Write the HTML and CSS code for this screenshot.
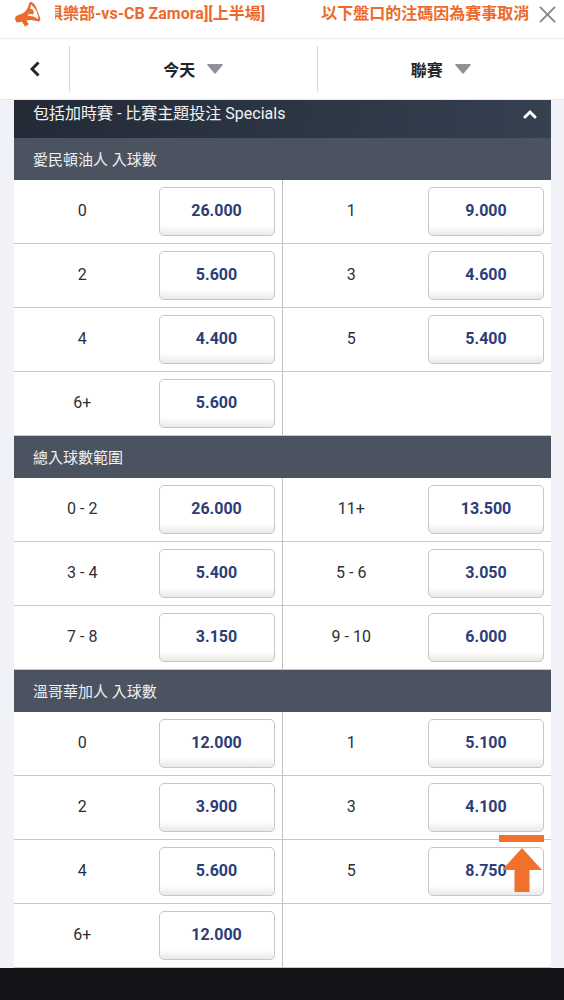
FILE: index.html
```html
<!DOCTYPE html>
<html lang="zh-Hant">
<head>
  <meta charset="utf-8">
  <meta name="viewport" content="width=device-width, initial-scale=1">
  <title>比賽主題投注</title>
  <link rel="stylesheet" href="styles.css">
</head>
<body>
  <div class="notice">
    <svg class="notice-icon" viewBox="0 0 26 26" aria-hidden="true">
      <path fill="#ee6a2c" fill-rule="evenodd" d="M14 2.500 Q14.600 0.600 16.400 1 Q18.600 1.600 20.600 5 L25 16.500 Q26 20.600 23.600 20.600 Q18 18.600 13 19.200 L11.500 19.600 L13.800 23.600 L10 25.600 L7 20.800 L2.500 21.600 Q1 21.600 0.200 18.600 Q-0.300 15.800 1.200 15 L8.500 12 Q12.600 9.200 14 2.500 Z M16 3.600 Q15.600 10 12.600 14.800 Q18 14.600 23.400 18 Q22.600 8.800 16 3.600 Z"/>
      <path fill="#ee6a2c" d="M15.400 7.800 Q18.600 8 18.800 11 Q18.800 12.600 17.800 13.400 Q16.400 12.600 13.400 13.400 Z"/>
    </svg>
    <div class="ticker">
      <span>俱樂部-vs-CB Zamora][上半場]</span>
      <span>以下盤口的注碼因為賽事取消</span>
    </div>
    <button class="notice-close" type="button" aria-label="關閉">
      <svg viewBox="0 0 18 18"><path d="M1 1 L17 17 M17 1 L1 17"/></svg>
    </button>
  </div>

  <nav class="filters">
    <button class="back" type="button" aria-label="返回">
      <svg viewBox="0 0 10 16"><path d="M8.500 1.500 L2 8 L8.500 14.500"/></svg>
    </button>
    <button class="filter" type="button">今天 <svg class="caret" viewBox="0 0 16 10"><path d="M1 0 H15 Q16.500 0 15.500 1.200 L9 9 Q8 10 7 9 L0.500 1.200 Q-0.500 0 1 0 Z"/></svg></button>
    <button class="filter" type="button">聯賽 <svg class="caret" viewBox="0 0 16 10"><path d="M1 0 H15 Q16.500 0 15.500 1.200 L9 9 Q8 10 7 9 L0.500 1.200 Q-0.500 0 1 0 Z"/></svg></button>
  </nav>

  <main class="markets">
    <div class="league">
      <h1>包括加時賽 - 比賽主題投注 Specials</h1>
      <button class="collapse" type="button" aria-label="收起">
        <svg viewBox="0 0 14 10"><path d="M2 8 L7 3 L12 8"/></svg>
      </button>
    </div>

    <!-- Edmonton goals -->
    <section>
      <h2>愛民頓油人 入球數</h2>
      <div class="odds">
        <div class="cell"><span id="a0">0</span><button type="button" aria-describedby="a0">26.000</button></div>
        <div class="cell"><span id="a1">1</span><button type="button" aria-describedby="a1">9.000</button></div>
        <div class="cell"><span id="a2">2</span><button type="button" aria-describedby="a2">5.600</button></div>
        <div class="cell"><span id="a3">3</span><button type="button" aria-describedby="a3">4.600</button></div>
        <div class="cell"><span id="a4">4</span><button type="button" aria-describedby="a4">4.400</button></div>
        <div class="cell"><span id="a5">5</span><button type="button" aria-describedby="a5">5.400</button></div>
        <div class="cell"><span id="a6">6+</span><button type="button" aria-describedby="a6">5.600</button></div>
        <div class="cell"></div>
      </div>
    </section>

    <!-- Total goals range -->
    <section>
      <h2>總入球數範圍</h2>
      <div class="odds">
        <div class="cell"><span id="b0">0 - 2</span><button type="button" aria-describedby="b0">26.000</button></div>
        <div class="cell"><span id="b1">11+</span><button type="button" aria-describedby="b1">13.500</button></div>
        <div class="cell"><span id="b2">3 - 4</span><button type="button" aria-describedby="b2">5.400</button></div>
        <div class="cell"><span id="b3">5 - 6</span><button type="button" aria-describedby="b3">3.050</button></div>
        <div class="cell"><span id="b4">7 - 8</span><button type="button" aria-describedby="b4">3.150</button></div>
        <div class="cell"><span id="b5">9 - 10</span><button type="button" aria-describedby="b5">6.000</button></div>
      </div>
    </section>

    <!-- Vancouver goals -->
    <section>
      <h2>溫哥華加人 入球數</h2>
      <div class="odds">
        <div class="cell"><span id="c0">0</span><button type="button" aria-describedby="c0">12.000</button></div>
        <div class="cell"><span id="c1">1</span><button type="button" aria-describedby="c1">5.100</button></div>
        <div class="cell"><span id="c2">2</span><button type="button" aria-describedby="c2">3.900</button></div>
        <div class="cell"><span id="c3">3</span><button type="button" aria-describedby="c3">4.100</button></div>
        <div class="cell"><span id="c4">4</span><button type="button" aria-describedby="c4">5.600</button></div>
        <div class="cell"><span id="c5">5</span><button type="button" aria-describedby="c5">8.750</button></div>
        <div class="cell"><span id="c6">6+</span><button type="button" aria-describedby="c6">12.000</button></div>
        <div class="cell"></div>
      </div>
    </section>
  </main>

  <button class="to-top" type="button" aria-label="回到頂部">
    <svg viewBox="0 0 45 57"><path d="M0 0 H45 V7 H0 Z M23 13 L43 35 H30.500 V57 H15.500 V35 H3 Z"/></svg>
  </button>

  <footer class="bottom-bar"></footer>
</body>
</html>
```
FILE: styles.css
```css
* {
  box-sizing: border-box;
}

body {
  margin: 0;
  min-height: 100vh;
  display: flex;
  flex-direction: column;
  background: #f1f2f7;
  color: #2b2f36;
  font-family: Roboto, "Noto Sans CJK TC", sans-serif;
  font-size: 16px;
}

button {
  margin: 0;
  padding: 0;
  border: 0;
  background: none;
  color: inherit;
  font: inherit;
  cursor: pointer;
}

svg {
  display: block;
  fill: none;
}

/* Notice ticker */
.notice {
  display: flex;
  align-items: center;
  height: 39px;
  padding: 0 8px 10px 15px;
  background: #fff;
  border-bottom: 1px solid #ececee;
}

.notice-icon {
  width: 26px;
  height: 26px;
  flex: none;
}

.ticker {
  flex: 1;
  display: flex;
  gap: 56px;
  margin-left: 14px;
  overflow: hidden;
  color: #ee6a2c;
  font-weight: 700;
  line-height: 28px;
  white-space: nowrap;
}

.ticker span:first-child {
  margin-left: -8px;
}

.notice-close {
  margin-left: 8px;
}

.notice-close svg {
  width: 17px;
  height: 17px;
  stroke: #858891;
  stroke-width: 2;
}

/* Filters */
.filters {
  display: flex;
  height: 61px;
  padding: 7px 0;
  background: #fff;
  border-bottom: 1px solid #e8e8ea;
}

.back {
  display: flex;
  align-items: center;
  justify-content: center;
  width: 69px;
}

.back svg {
  width: 10px;
  height: 16px;
  stroke: #212429;
  stroke-width: 3;
}

.filter {
  flex: 1;
  display: flex;
  align-items: center;
  justify-content: center;
  gap: 12px;
  border-left: 1px solid #d8d8da;
  color: #212429;
  font-weight: 700;
}

.caret {
  width: 16px;
  height: 10px;
  fill: #8f9198;
}

/* Markets */
.markets {
  flex: 1;
  margin: 0 13px 0 14px;
  background: #fff;
}

.league {
  display: flex;
  justify-content: space-between;
  height: 38px;
  padding: 0 14px 10px 19px;
  background: linear-gradient(100deg, #232a36, #354051);
  color: #f1f2f4;
}

.league h1 {
  margin: 0;
  font-size: 16px;
  font-weight: 400;
  line-height: 28px;
}

.collapse svg {
  width: 14px;
  height: 10px;
  stroke: #fff;
  stroke-width: 3;
  stroke-linecap: round;
}

.markets h2 {
  margin: 0;
  padding: 2px 19px 0;
  background: #4b5260;
  color: #eeeff1;
  font-size: 15px;
  font-weight: 400;
  line-height: 40px;
}

.odds {
  display: grid;
  grid-template-columns: 1fr 1fr;
}

.cell {
  display: flex;
  align-items: center;
  gap: 8px;
  height: 64px;
  padding: 7px 7px 7px 0;
  border-bottom: 1px solid #c8c8c8;
}

.cell:nth-child(odd) {
  border-right: 1px solid #c0c0c0;
}

.cell span {
  flex: 1;
  padding-bottom: 2px;
  text-align: center;
}

.cell button {
  width: 116px;
  height: 49px;
  padding-bottom: 2px;
  border: 1px solid #c6c6c6;
  border-radius: 5px;
  background: linear-gradient(#fff 80%, #e9e9e9);
  color: #2b3d77;
  font-weight: 700;
}

/* Back to top */
.to-top {
  position: fixed;
  right: 20px;
  bottom: 108px;
}

.to-top svg {
  width: 45px;
  height: 57px;
  fill: #f0702c;
}

.bottom-bar {
  height: 32px;
  background: #131519;
}
```
